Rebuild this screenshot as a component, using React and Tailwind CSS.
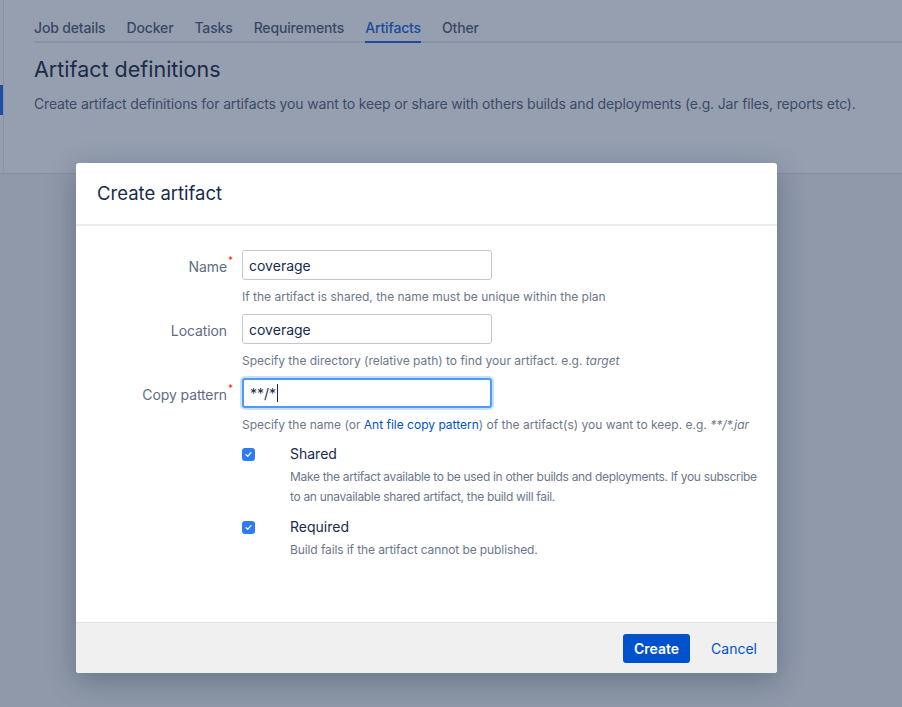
import { useState } from 'react';

const font = { fontFamily: 'Inter, "Noto Sans", sans-serif' };

/**
 * Small blue checkbox with a white tick, as in the reference.
 */
function Check() {
    return (
        <span className="flex h-[13px] w-[13px] items-center justify-center rounded-[3px] bg-[#2d7cf6]">
            <svg viewBox="0 0 10 10" className="h-[9px] w-[9px]" fill="none">
                <path d="M2.3 5.2 L4.2 7 L7.7 2.9" stroke="white" strokeWidth="1.4" strokeLinecap="round" strokeLinejoin="round" />
            </svg>
        </span>
    );
}

function Field({ label, required, value, focused, children }) {
    return (
        <div className="flex">
            <div className="w-[166px] pt-[6px] pr-[15px] text-right text-[14px] tracking-[-0.1px] text-[#5e6c84]">
                <span className="relative">
                    {label}
                    {required && <span className="absolute -top-[5px] left-full pl-[1px] text-[10px] text-[#de350b]">*</span>}
                </span>
            </div>
            <div className="flex flex-col">
                <div
                    className={`flex h-[30px] w-[250px] items-center rounded-[3px] bg-white px-[6px] text-[14px] text-[#172b4d] ${focused
                        ? 'border-2 border-[#4c9aff] px-[5px] shadow-[0_0_0_2px_rgba(76,154,255,0.3)]'
                        : 'border border-[#c1c7d0]'
                        }`}
                >
                    {value}
                    {focused && <span className="ml-[1px] h-[18px] w-[1px] bg-[#172b4d]" />}
                </div>
                <p className="mt-[7px] text-[12px] leading-[20px] text-[#6b778c]">{children}</p>
            </div>
        </div>
    );
}

export default function App() {
    const [tab] = useState('Artifacts');
    const tabs = ['Job details', 'Docker', 'Tasks', 'Requirements', 'Artifacts', 'Other'];

    return (
        <div className="relative h-[707px] w-[902px] overflow-hidden bg-[#8f99a9]" style={font}>
            {/* Page behind the overlay */}
            <div className="flex h-[174px] border-b border-[#87909f] bg-[#959fb0]">
                <div className="relative w-[4px] border-r border-[#8a93a3]">
                    <div className="absolute left-0 top-[85px] h-[30px] w-[3px] bg-[#1d4fa8]" />
                </div>
                <div className="flex-1 pl-[30px]">
                    <div className="flex h-[43px] items-end gap-[21px] border-b-2 border-[#8a93a4] pt-[14px]">
                        {tabs.map((t) => (
                            <div
                                key={t}
                                className={`-mb-[2px] pb-[3px] text-[14px] font-medium tracking-[-0.15px] ${t === tab
                                    ? 'border-b-2 border-[#1a4a9e] text-[#1a4a9e]'
                                    : 'border-b-2 border-transparent text-[#3a4764]'
                                    }`}
                            >
                                {t}
                            </div>
                        ))}
                    </div>
                    <h1 className="mt-[11px] text-[21.5px] leading-[30px] text-[#1c2b48]">Artifact definitions</h1>
                    <p className="mt-[9px] text-[14px] tracking-[-0.15px] text-[#3e4a66]">
                        Create artifact definitions for artifacts you want to keep or share with others builds and deployments (e.g. Jar files, reports etc).
                    </p>
                </div>
            </div>

            {/* Dialog */}
            <div className="absolute left-[76px] top-[163px] flex h-[510px] w-[701px] flex-col overflow-hidden rounded-[3px] bg-white shadow-[0_8px_30px_rgba(9,30,66,0.3)]">
                <div className="flex h-[63px] items-center border-b-2 border-[#ebecf0] px-[21px]">
                    <h2 className="text-[18.5px] text-[#172b4d]">Create artifact</h2>
                </div>

                <div className="flex flex-1 flex-col gap-[7px] pt-[24px]">
                    <Field label="Name" required value="coverage">
                        If the artifact is shared, the name must be unique within the plan
                    </Field>
                    <Field label="Location" value="coverage">
                        Specify the directory (relative path) to find your artifact. e.g. <i>target</i>
                    </Field>
                    <Field label="Copy pattern" required value="**/*" focused>
                        Specify the name (or <span className="text-[#0052cc]">Ant file copy pattern</span>) of the artifact(s) you want to keep. e.g. <i>**/*.jar</i>
                    </Field>

                    <div className="ml-[166px] flex flex-col gap-[8px]">
                        <div>
                            <div className="flex items-center gap-[35px]">
                                <Check />
                                <span className="text-[14px] leading-[24px] text-[#172b4d]">Shared</span>
                            </div>
                            <p className="ml-[48px] mt-[1px] w-[475px] text-[12px] leading-[20px] tracking-[-0.32px] text-[#6b778c]">
                                Make the artifact available to be used in other builds and deployments. If you subscribe to an unavailable shared artifact, the build will fail.
                            </p>
                        </div>
                        <div>
                            <div className="flex items-center gap-[35px]">
                                <Check />
                                <span className="text-[14px] leading-[24px] text-[#172b4d]">Required</span>
                            </div>
                            <p className="ml-[48px] mt-[1px] text-[12px] leading-[20px] tracking-[-0.1px] text-[#6b778c]">
                                Build fails if the artifact cannot be published.
                            </p>
                        </div>
                    </div>
                </div>

                <div className="flex h-[51px] items-center justify-end gap-[21px] border-t border-[#dfe1e6] bg-[#f0f0f0] pr-[20px]">
                    <button type="button" className="h-[29px] rounded-[3px] bg-[#0052cc] px-[11px] text-[14px] font-semibold text-white">
                        Create
                    </button>
                    <button type="button" className="text-[14px] text-[#0052cc]">Cancel</button>
                </div>
            </div>
        </div>
    );
}
